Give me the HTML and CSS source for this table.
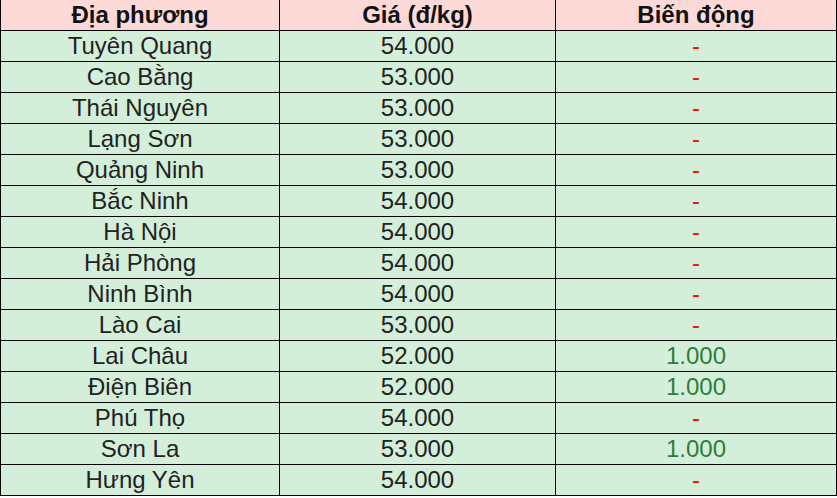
FILE: index.html
```html
<!DOCTYPE html>
<html lang="vi">
<head>
<meta charset="utf-8">
<title>Giá heo hơi</title>
<link rel="stylesheet" href="styles.css">
</head>
<body>
<table class="price-table">
  <colgroup>
    <col class="c1"><col class="c2"><col class="c3">
  </colgroup>
  <thead>
    <tr><th>Địa phương</th><th>Giá (đ/kg)</th><th>Biến động</th></tr>
  </thead>
  <tbody>
    <tr><td>Tuyên Quang</td><td>54.000</td><td class="flat">-</td></tr>
    <tr><td>Cao Bằng</td><td>53.000</td><td class="flat">-</td></tr>
    <tr><td>Thái Nguyên</td><td>53.000</td><td class="flat">-</td></tr>
    <tr><td>Lạng Sơn</td><td>53.000</td><td class="flat">-</td></tr>
    <tr><td>Quảng Ninh</td><td>53.000</td><td class="flat">-</td></tr>
    <tr><td>Bắc Ninh</td><td>54.000</td><td class="flat">-</td></tr>
    <tr><td>Hà Nội</td><td>54.000</td><td class="flat">-</td></tr>
    <tr><td>Hải Phòng</td><td>54.000</td><td class="flat">-</td></tr>
    <tr><td>Ninh Bình</td><td>54.000</td><td class="flat">-</td></tr>
    <tr><td>Lào Cai</td><td>53.000</td><td class="flat">-</td></tr>
    <tr><td>Lai Châu</td><td>52.000</td><td class="up">1.000</td></tr>
    <tr><td>Điện Biên</td><td>52.000</td><td class="up">1.000</td></tr>
    <tr><td>Phú Thọ</td><td>54.000</td><td class="flat">-</td></tr>
    <tr><td>Sơn La</td><td>53.000</td><td class="up">1.000</td></tr>
    <tr><td>Hưng Yên</td><td>54.000</td><td class="flat">-</td></tr>
  </tbody>
</table>
</body>
</html>
```
FILE: styles.css
```css
html, body {
  margin: 0;
  padding: 0;
  background: #ffffff;
}
.price-table {
  border-collapse: collapse;
  width: 836px;
  margin-top: -1px;
  table-layout: fixed;
  font-family: "Liberation Sans", Arial, sans-serif;
  font-size: 24px;
  color: #222222;
}
.c1 { width: 279px; }
.c2 { width: 276px; }
.c3 { width: 281px; }
.price-table th,
.price-table td {
  border: 1px solid #000000;
  height: 30px;
  padding: 0;
  text-align: center;
  vertical-align: middle;
  line-height: 30px;
}
.price-table th {
  background: #fddad8;
  font-weight: bold;
  color: #111111;
}
.price-table td {
  background: #d3efda;
}
.price-table td.flat {
  color: #ee1111;
}
.price-table td.up {
  color: #2e7d3a;
}
```
